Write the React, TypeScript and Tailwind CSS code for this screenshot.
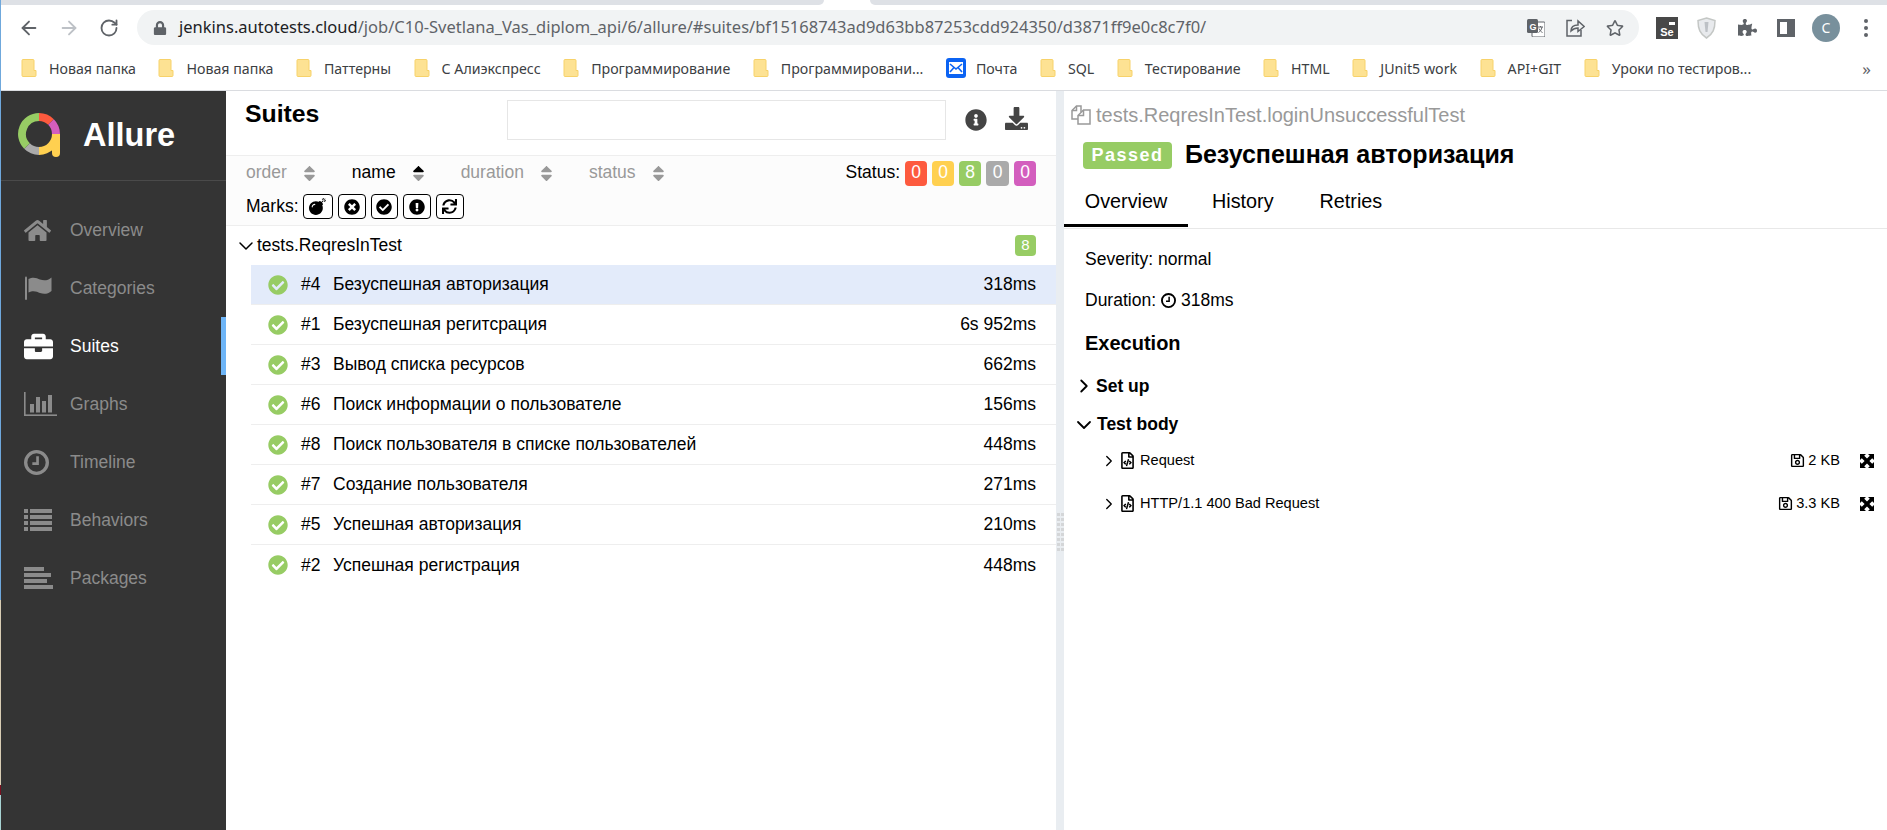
import React from "react";
import { ArrowLeft, ArrowRight, ChevronDown, ChevronRight, RotateCw } from "lucide-react";
import {
  FaBomb,
  FaBriefcase,
  FaCheckCircle,
  FaDownload,
  FaExclamationCircle,
  FaHome,
  FaInfoCircle,
  FaLock,
  FaPuzzlePiece,
  FaRegFileCode,
  FaRegSave,
  FaRegStar,
  FaSort,
  FaSortUp,
  FaSortDown,
  FaSync,
  FaTimesCircle,
} from "react-icons/fa";

const arial = "font-['Liberation_Sans',Arial,sans-serif]";

const bookmarks = [
  "Новая папка",
  "Новая папка",
  "Паттерны",
  "С Алиэкспресс",
  "Программирование",
  "Программировани...",
  "@mail",
  "SQL",
  "Тестирование",
  "HTML",
  "JUnit5 work",
  "API+GIT",
  "Уроки по тестиров...",
];

const tests = [
  { order: "#4", name: "Безуспешная авторизация", time: "318ms" },
  { order: "#1", name: "Безуспешная регитсрация", time: "6s 952ms" },
  { order: "#3", name: "Вывод списка ресурсов", time: "662ms" },
  { order: "#6", name: "Поиск информации о пользователе", time: "156ms" },
  { order: "#8", name: "Поиск пользователя в списке пользователей", time: "448ms" },
  { order: "#7", name: "Создание пользователя", time: "271ms" },
  { order: "#5", name: "Успешная авторизация", time: "210ms" },
  { order: "#2", name: "Успешная регистрация", time: "448ms" },
];

const statuses = [
  { n: 0, cls: "bg-[#fd5a3e] w-[22px]" },
  { n: 0, cls: "bg-[#ffd050] w-[22px]" },
  { n: 8, cls: "bg-[#97cc64] w-[22px]" },
  { n: 0, cls: "bg-[#aaaaaa] w-[23px]" },
  { n: 0, cls: "bg-[#d35ebe] w-[22px]" },
];

const FolderIcon = () => (
  <svg width="16" height="18" viewBox="0 0 16 18" className="shrink-0">
    <path d="M1 1.5 a1 1 0 0 1 1-1 h10 a1 1 0 0 1 1 1 v10 h2 v5 a1 1 0 0 1-1 1 H2 a1 1 0 0 1-1-1 z" fill="#fde293" stroke="#f7d26a" />
  </svg>
);

const MailIcon = () => (
  <svg width="20" height="20" viewBox="0 0 20 20" className="shrink-0">
    <rect width="20" height="20" rx="3" fill="#0b63f3" />
    <rect x="3" y="4" width="14" height="12" fill="#fff" />
    <path d="M4 6 L10 11 L16 6 M4 14 L8 9.5 M16 14 L12 9.5" stroke="#0b63f3" strokeWidth="1.6" fill="none" />
  </svg>
);

const Logo = () => (
  <svg width="44" height="46" viewBox="0 0 44 46">
    <g fill="none" strokeWidth="8">
      <path d="M21 4 A17 17 0 0 1 33 9" stroke="#fd5a3e" />
      <path d="M33 9 A17 17 0 0 1 38 21" stroke="#d35ebe" />
      <path d="M38 21 V38 M38 21 A17 17 0 0 1 21 38" stroke="#ffd050" />
      <path d="M21 38 A17 17 0 0 1 9 33" stroke="#aaaaaa" />
      <path d="M9 33 A17 17 0 0 1 21 4" stroke="#97cc64" />
    </g>
    <path d="M38 38 v2" stroke="#ffd050" strokeWidth="8" strokeLinecap="round" />
  </svg>
);

const FlagIcon = () => (
  <svg width="28" height="24" viewBox="0 0 28 24" fill="currentColor">
    <rect x="1" y="0.5" width="2" height="23.5" rx="1" />
    <path d="M4.5 3 C9 0.5 13 2 16 3.5 C20 5 24 4.5 27.5 1.5 V15 C24 18 20 18.5 16 17 C13 15.5 9 14 4.5 16.5 Z" />
  </svg>
);

const BarsIcon = () => (
  <svg width="33" height="24" viewBox="0 0 33 24" fill="currentColor">
    <rect x="0" y="0" width="1.6" height="24" />
    <rect x="0" y="22.4" width="33" height="1.6" />
    <rect x="6" y="12" width="4" height="8.5" />
    <rect x="12" y="5" width="4" height="15.5" />
    <rect x="18" y="9" width="4" height="11.5" />
    <rect x="24" y="3" width="4" height="17.5" />
  </svg>
);

const ClockIcon = ({ size, stroke }: { size: number; stroke: number }) => (
  <svg width={size} height={size} viewBox="0 0 24 24" fill="none" stroke="currentColor">
    <circle cx="12" cy="12" r={12 - stroke / 2} strokeWidth={stroke} />
    <path d="M13 6 V13 H8" strokeWidth={stroke * 0.8} />
  </svg>
);

const ListIcon = () => (
  <svg width="28" height="22" viewBox="0 0 28 22" fill="currentColor">
    {[0, 6, 12, 18].map((y) => (
      <g key={y}>
        <rect x="0" y={y} width="4" height="4" />
        <rect x="6" y={y} width="22" height="4" />
      </g>
    ))}
  </svg>
);

const PackagesIcon = () => (
  <svg width="29" height="22" viewBox="0 0 29 22" fill="currentColor">
    <rect x="0" y="0" width="20" height="4" />
    <rect x="0" y="6" width="27" height="4" />
    <rect x="0" y="12" width="23" height="4" />
    <rect x="0" y="18" width="29" height="4" />
  </svg>
);

const ExpandIcon = () => (
  <svg width="14" height="14" viewBox="0 0 14 14" fill="#000">
    <path d="M0 0 H6 L4.2 1.8 L7 4.6 L9.8 1.8 L8 0 H14 V6 L12.2 4.2 L9.4 7 L12.2 9.8 L14 8 V14 H8 L9.8 12.2 L7 9.4 L4.2 12.2 L6 14 H0 V8 L1.8 9.8 L4.6 7 L1.8 4.2 L0 6 Z" />
  </svg>
);

const CopyIcon = () => (
  <svg width="20" height="20" viewBox="0 0 20 20" fill="none" stroke="#999999" strokeWidth="1.5">
    <path d="M10 7 V1 H5.500 L1 5.500 V14 H7" />
    <path d="M1 5.500 H5.500 V1" />
    <path d="M12.500 5 H19 V19 H7 V10.500 Z" fill="#fff" />
    <path d="M7 10.500 H12.500 V5" />
  </svg>
);

const navItems = [
  { label: "Overview", icon: <FaHome size={27} /> },
  { label: "Categories", icon: <FlagIcon /> },
  { label: "Suites", icon: <FaBriefcase size={29} />, active: true },
  { label: "Graphs", icon: <BarsIcon /> },
  { label: "Timeline", icon: <ClockIcon size={25} stroke={3.2} /> },
  { label: "Behaviors", icon: <ListIcon /> },
  { label: "Packages", icon: <PackagesIcon /> },
];

const BrowserChrome = () => (
  <div className="shrink-0 font-['Noto_Sans',sans-serif]">
    <div className="flex h-[5px] bg-white">
      <div className="w-[823px] rounded-br-lg bg-[#dee1e6]" />
      <div className="w-[46px]" />
      <div className="flex-1 rounded-bl-lg bg-[#dee1e6]" />
    </div>
    <div className="flex h-[40px] items-start bg-white pt-[5px]">
      <div className="flex h-[35px] w-[136px] items-center text-[#5f6368]">
        <ArrowLeft size={22} strokeWidth={2} className="ml-[17px]" />
        <ArrowRight size={22} strokeWidth={2} className="ml-[18px] text-[#bdc1c6]" />
        <RotateCw size={20} strokeWidth={2.2} className="ml-[19px]" />
      </div>
      <div className="flex h-[35px] w-[1502px] items-center rounded-full bg-[#f1f3f4] pl-[16px]">
        <FaLock size={14} className="text-[#5f6368]" />
        <span className="ml-[12px] whitespace-nowrap text-[16.500px] text-[#5f6368]">
          <span className="text-[#202124]">jenkins.autotests.cloud</span>
          /job/C10-Svetlana_Vas_diplom_api/6/allure/#suites/bf15168743ad9d63bb87253cdd924350/d3871ff9e0c8c7f0/
        </span>
        <div className="ml-auto mr-[15px] flex items-center gap-[21px] text-[#5f6368]">
          <svg width="18" height="18" viewBox="0 0 18 18">
            <rect x="5" y="3" width="13" height="15" rx="1" fill="#fff" stroke="#5f6368" />
            <rect x="0" y="0" width="11" height="14" rx="1.5" fill="#5f6368" />
            <text x="2.5" y="10.5" fontSize="9" fontWeight="700" fill="#fff" fontFamily="Liberation Sans">G</text>
            <path d="M11 8 h5 M13.5 7 v1 M15 8 c-.5 3-2 4.5-3.5 5.5 M12 9.5 c.7 2 2 3.200 3.500 4" stroke="#5f6368" fill="none" strokeWidth="1" />
          </svg>
          <svg width="19" height="18" viewBox="0 0 19 18" fill="none" stroke="#5f6368" strokeWidth="1.5">
            <path d="M6 1.500 H1 V17 H15 V11" />
            <path d="M5 12 C5 8 8 6 12 6 V2 L18.200 7.500 L12 12.500 V9 C9 9 7 10 5 12 Z" />
          </svg>
          <FaRegStar size={18} />
        </div>
      </div>
      <div className="flex h-[35px] flex-1 items-center pl-[17px]">
        <div className="flex h-[22px] w-[22px] flex-col items-center justify-end bg-[#484848] pb-[1px] text-[11px] leading-none font-bold text-white">
          <span className="mb-[-1px] mr-[-10px] block h-[3px] w-[6px] self-center bg-white" />
          <span className="mt-[3px] font-['Liberation_Sans',sans-serif]">Se</span>
        </div>
        <svg width="19" height="22" viewBox="0 0 19 22" className="ml-[19px]">
          <path d="M9.500 1 L18 3.500 C18 12 16 17 9.500 21 C3 17 1 12 1 3.500 Z" fill="#e8eaed" stroke="#c4c7c5" strokeWidth="1.500" />
          <path d="M7.500 5 H11.500 L10.500 15 H8.500 Z" fill="#bdc1c6" />
        </svg>
        <FaPuzzlePiece size={19} className="ml-[22px] text-[#5f6368]" />
        <div className="ml-[20px] flex h-[18px] w-[18px] items-center justify-start border-[3px] border-[#5f6368] bg-white">
          <span className="ml-auto h-full w-[5px] bg-[#5f6368]" />
        </div>
        <div className="ml-[17px] flex h-[28px] w-[28px] items-center justify-center rounded-full bg-[#78909c] text-[14px] text-white">
          C
        </div>
        <div className="ml-[24px] flex flex-col gap-[3px]">
          <span className="h-[4px] w-[4px] rounded-full bg-[#5f6368]" />
          <span className="h-[4px] w-[4px] rounded-full bg-[#5f6368]" />
          <span className="h-[4px] w-[4px] rounded-full bg-[#5f6368]" />
        </div>
      </div>
    </div>
    <div className="flex h-[46px] items-center border-b border-[#dadce0] bg-white pl-[20px] pt-[2px]">
      <div className="flex items-center gap-[22.500px]">
        {bookmarks.map((b, i) =>
          b === "@mail" ? (
            <div key={i} className="flex items-center gap-[10px]">
              <MailIcon />
              <span className="whitespace-nowrap text-[14.200px] text-[#3c4043]">Почта</span>
            </div>
          ) : (
            <div key={i} className="flex items-center gap-[12px]">
              <FolderIcon />
              <span className="whitespace-nowrap text-[14.200px] text-[#3c4043]">{b}</span>
            </div>
          ),
        )}
      </div>
      <span className="ml-auto mr-[16px] text-[17px] leading-none text-[#5f6368]">»</span>
    </div>
  </div>
);

const Sidebar = () => (
  <div className="flex w-[225px] shrink-0 flex-col bg-[#343434]">
    <div className="flex h-[90px] items-center border-b border-[#4a4a4a] pl-[17px]">
      <Logo />
      <span className="ml-[21px] text-[32.500px] font-bold text-white">Allure</span>
    </div>
    <div className="pt-[20px]">
      {navItems.map((item) => (
        <div
          key={item.label}
          className={`flex h-[58px] items-center text-[17.500px] ${item.active ? "text-white" : "text-[#8b8b8b]"}`}
        >
          <div className="flex w-[69px] shrink-0 pl-[23px]">{item.icon}</div>
          <span>{item.label}</span>
          {item.active && <span className="ml-auto h-full w-[5px] bg-[#6eb5f7]" />}
        </div>
      ))}
    </div>
  </div>
);

const SortItem = ({ label, active }: { label: string; active?: boolean }) => (
  <div className={`flex items-center gap-[13.500px] ${active ? "text-black" : "text-[#999999]"}`}>
    <span>{label}</span>
    {active ? (
      <span className="relative block h-[19px] w-[19px]">
        <FaSortDown size={19} className="absolute left-0 top-0 text-[#999999]" />
        <FaSortUp size={19} className="absolute left-0 top-0 text-black" />
      </span>
    ) : (
      <FaSort size={19} />
    )}
  </div>
);

const MarkButton = ({ children, w }: { children: React.ReactNode; w: string }) => (
  <div className={`flex h-[25px] items-center justify-center rounded-[4px] border border-black bg-white ${w}`}>
    {children}
  </div>
);

const SuitesPane = () => (
  <div className="flex w-[830px] shrink-0 flex-col">
    <div className="flex h-[65px] items-start border-b border-[#eeeeee] pl-[19px] pr-[20px]">
      <h1 className="mt-[8px] text-[24.800px] font-bold leading-[30px] text-black">Suites</h1>
      <div className="ml-[188px] mt-[9px] h-[40px] w-[439px] border border-[#e6e6e6]" />
      <FaInfoCircle size={22} className="ml-[19px] mt-[18px] text-[#444444]" />
      <FaDownload size={23} className="ml-[18px] mt-[16px] text-[#444444]" />
    </div>
    <div className="h-[70px] border-b border-[#eeeeee] bg-[#fcfcfc] pl-[20px] pr-[20px] text-[17.500px] leading-none">
      <div className="flex h-[34px] items-center">
        <div className="flex gap-[32.500px]">
          <SortItem label="order" />
          <SortItem label="name" active />
          <SortItem label="duration" />
          <SortItem label="status" />
        </div>
        <div className="ml-auto flex items-center gap-[5px] text-black">
          <span>Status:</span>
          {statuses.map((s, i) => (
            <span key={i} className={`flex h-[25px] items-center justify-center rounded-[4px] text-white ${s.cls}`}>
              {s.n}
            </span>
          ))}
        </div>
      </div>
      <div className="flex items-center gap-[5px] pt-[4px]">
        <span className="mr-[-1px]">Marks:</span>
        <MarkButton w="w-[30px]"><FaBomb size={17} /></MarkButton>
        <MarkButton w="w-[28px]"><FaTimesCircle size={16} /></MarkButton>
        <MarkButton w="w-[27px]"><FaCheckCircle size={16} /></MarkButton>
        <MarkButton w="w-[28px]"><FaExclamationCircle size={16} /></MarkButton>
        <MarkButton w="w-[28px]"><FaSync size={15} /></MarkButton>
      </div>
    </div>
    <div className="flex h-[39px] items-center pl-[8px] pr-[20px] text-[17.500px]">
      <ChevronDown size={24} strokeWidth={1.500} />
      <span className="ml-[-1px]">tests.ReqresInTest</span>
      <span className="ml-auto flex h-[21px] w-[21px] items-center justify-center rounded-[4px] bg-[#97cc64] text-[15px] text-white">
        8
      </span>
    </div>
    <div className="ml-[25px] text-[17.500px]">
      {tests.map((t, i) => (
        <div
          key={t.order}
          className={`flex h-[40px] items-center pl-[17px] pr-[20px] ${i === 0 ? "bg-[#e3ebfa]" : ""} ${i < tests.length - 1 ? "border-b border-[#eeeeee]" : ""}`}
        >
          <FaCheckCircle size={20} className="text-[#97cc64]" />
          <span className="ml-[13px] w-[32px]">{t.order}</span>
          <span>{t.name}</span>
          <span className="ml-auto">{t.time}</span>
        </div>
      ))}
    </div>
  </div>
);

const Splitter = () => (
  <div className="w-[8px] shrink-0 bg-[#e9edf1] pt-[422px]">
    <div className="grid grid-cols-2 justify-center gap-x-[1px] gap-y-[2px] px-[1px]">
      {Array.from({ length: 16 }).map((_, i) => (
        <span key={i} className="h-[3px] w-[3px] bg-[#d4d6d8]" />
      ))}
    </div>
  </div>
);

const Attachment = ({ name, size }: { name: string; size: string }) => (
  <div className="flex h-[43px] items-center pl-[36px] pr-[13px] text-[14.600px]">
    <ChevronRight size={18} strokeWidth={1.800} />
    <FaRegFileCode size={17} className="ml-[1px]" />
    <span className="ml-[4px]">{name}</span>
    <FaRegSave size={15} className="ml-auto" />
    <span className="ml-[3px]">{size}</span>
    <span className="ml-[20px]"><ExpandIcon /></span>
  </div>
);

const DetailPane = () => (
  <div className="min-w-0 flex-1">
    <div className="flex h-[47px] items-center pl-[7px] pt-[1px] text-[20px] text-[#999999]">
      <CopyIcon />
      <span className="ml-[5px]">tests.ReqresInTest.loginUnsuccessfulTest</span>
    </div>
    <div className="flex h-[34px] items-center pl-[19px]">
      <span className="flex h-[27px] w-[89px] items-center justify-center rounded-[4px] bg-[#97cc64] pt-[1px] text-[18px] font-bold tracking-[1.500px] text-white">
        Passed
      </span>
      <span className="ml-[13px] text-[25px] font-bold text-black">Безуспешная авторизация</span>
    </div>
    <div className="flex h-[57px] items-end border-b border-[#e8e8e8] pb-[1px] text-[19.800px] leading-none">
      <div className="flex h-[50px] w-[124px] items-center justify-center border-b-[3px] border-black pt-[3px]">Overview</div>
      <div className="ml-[24px] flex h-[50px] items-center">History</div>
      <div className="ml-[46px] flex h-[50px] items-center">Retries</div>
    </div>
    <div className="pt-[10px] text-[17.500px]">
      <div className="flex h-[41px] items-center pl-[21px]">Severity: normal</div>
      <div className="flex h-[40px] items-center pl-[21px]">
        Duration:
        <span className="ml-[5px] mr-[5px]"><ClockIcon size={15} stroke={3} /></span>
        318ms
      </div>
      <div className="flex h-[46px] items-center pl-[21px] text-[20px] font-bold">Execution</div>
      <div className="flex h-[40px] items-center pl-[9px] font-bold">
        <ChevronRight size={22} strokeWidth={2} />
        <span className="ml-[1px]">Set up</span>
      </div>
      <div className="flex h-[37px] items-center pl-[8px] font-bold">
        <ChevronDown size={24} strokeWidth={1.800} />
        <span className="ml-[1px]">Test body</span>
      </div>
      <div className="mt-[-4px]">
        <Attachment name="Request" size="2 KB" />
        <Attachment name="HTTP/1.1 400 Bad Request" size="3.3 KB" />
      </div>
    </div>
  </div>
);

export default function App() {
  return (
    <div className={`flex h-[830px] w-[1887px] overflow-hidden bg-white text-black ${arial}`}>
      <div className="flex w-px shrink-0 flex-col">
        <div className="h-[600px] bg-[#6fa8dc]" />
        <div className="h-[185px] bg-[#d8cdb4]" />
        <div className="h-[10px] bg-[#7a1020]" />
        <div className="flex-1 bg-[#a8d4d4]" />
      </div>
      <div className="flex min-w-0 flex-1 flex-col">
        <BrowserChrome />
        <div className="flex min-h-0 flex-1">
          <Sidebar />
          <SuitesPane />
          <Splitter />
          <DetailPane />
        </div>
      </div>
    </div>
  );
}
